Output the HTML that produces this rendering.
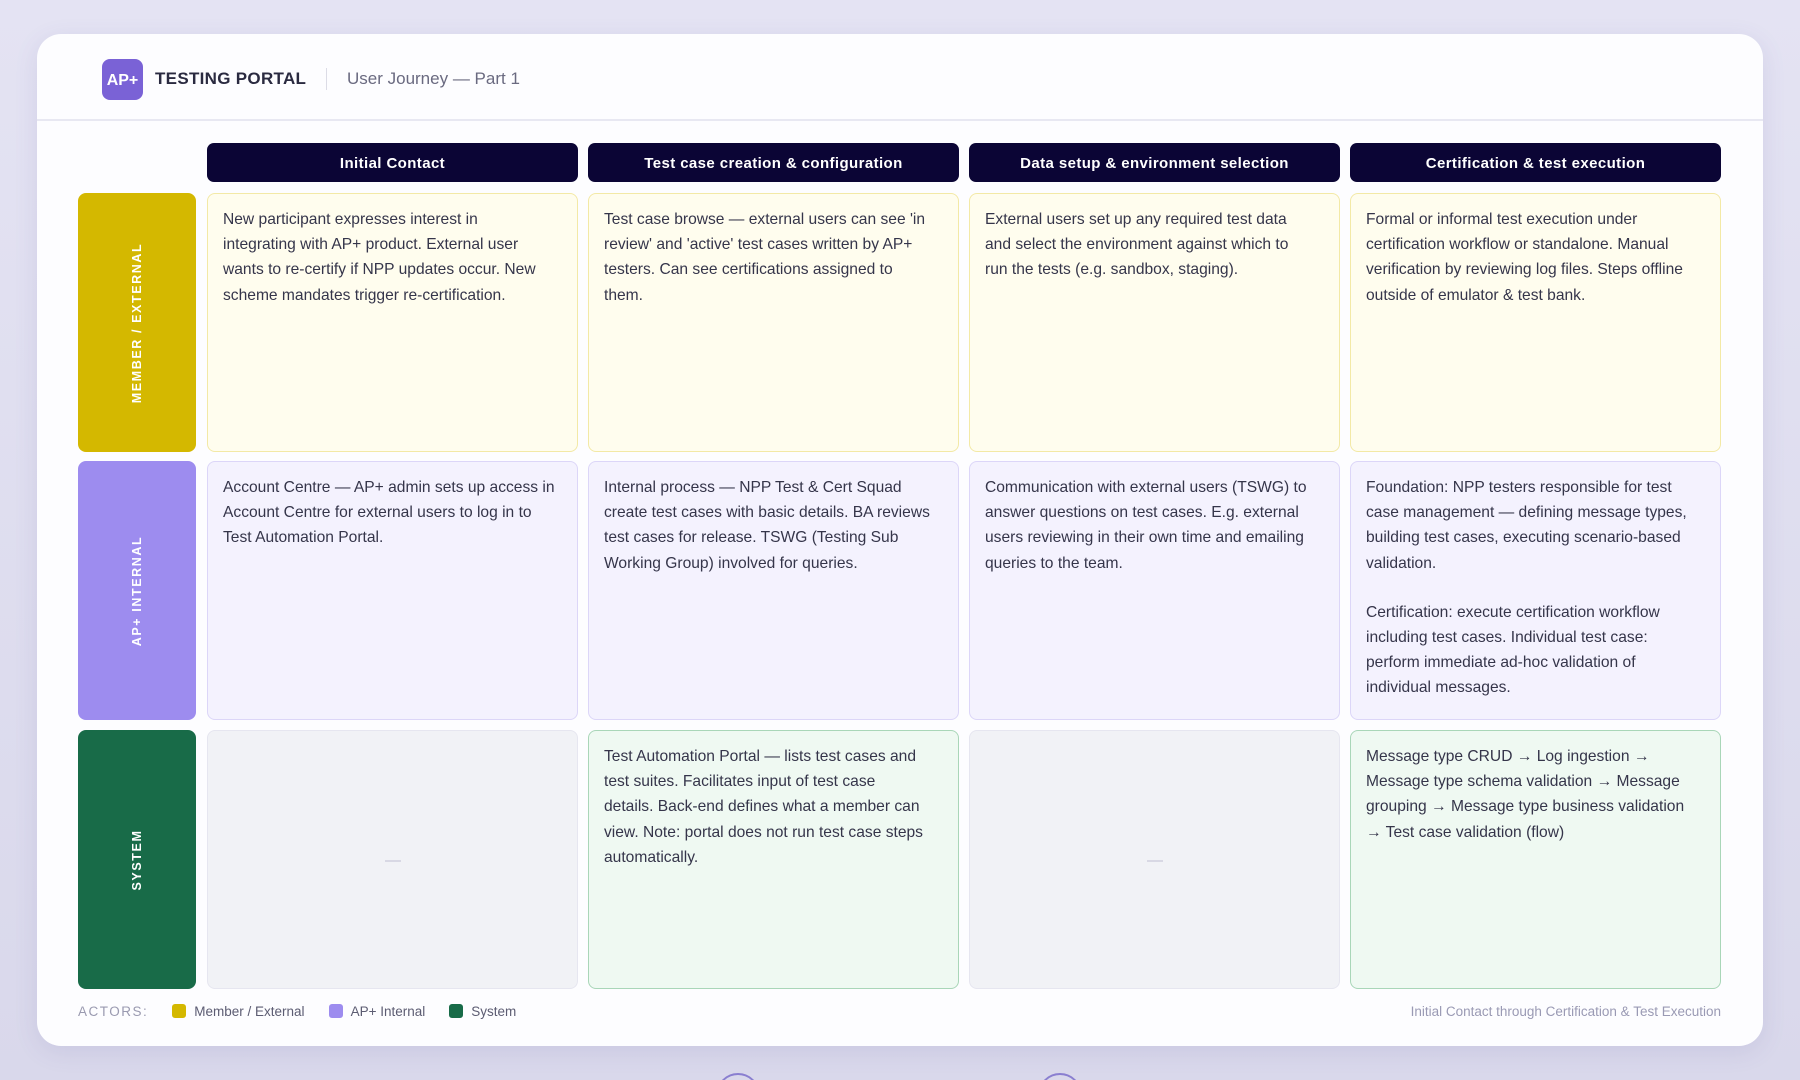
<!DOCTYPE html>
<html><head><meta charset="utf-8"><style>
*{box-sizing:border-box;margin:0;padding:0}
html,body{width:1800px;height:1080px;overflow:hidden}
body{background:linear-gradient(180deg,#e4e3f3,#d9d8eb);font-family:"Liberation Sans",sans-serif;position:relative}
.card{position:absolute;left:37px;top:34px;width:1726px;height:1012px;background:#fdfdff;border-radius:24px;box-shadow:0 6px 24px rgba(90,80,160,.12)}
.hdr{position:absolute;left:0;top:0;right:0;height:87px;border-bottom:2px solid #e8e8f2}
.logo{position:absolute;left:65px;top:25px;width:41px;height:41px;border-radius:8px;background:#7a62d6;color:#fff;font-weight:bold;font-size:16px;line-height:43px;text-align:center}
.title{position:absolute;left:118px;top:35px;font-size:17px;font-weight:bold;color:#2a2a40;letter-spacing:.3px}
.sep{position:absolute;left:289px;top:34px;width:1px;height:22px;background:#dcdce6}
.sub{position:absolute;left:310px;top:35px;font-size:17px;color:#6a6a80}
.col{position:absolute;top:109px;height:39px;width:371px;background:#0b0535;color:#fff;border-radius:7px;font-weight:bold;font-size:15px;text-align:center;line-height:41px;letter-spacing:.4px}
.lab{position:absolute;left:41px;width:118px;height:259px;border-radius:8px}
.lab span{position:absolute;left:50%;top:50%;transform:translate(-50%,-50%) rotate(-90deg);white-space:nowrap;color:#fff;font-weight:bold;font-size:12.5px;letter-spacing:1.6px}
.cell{position:absolute;width:371px;height:259px;border-radius:8px;padding:13px 4px 13px 15px;font-size:15.6px;line-height:25.2px;color:#35354a;white-space:nowrap}
.y{background:#fffdee;border:1.5px solid #f3e9a6}
.p{background:#f4f2fe;border:1.5px solid #dcd6f8}
.g{background:#f1f2f6;border:1.5px solid #e6e6f0}
.gr{background:#eff9f2;border:1.5px solid #a9d6b8}
.dash{position:absolute;left:50%;top:50%;width:16px;height:2px;margin-left:-8px;background:#d8d8e4}
.leg{position:absolute;top:970px;font-size:13.5px;color:#5c5c72}
.sw{display:inline-block;width:14px;height:14px;border-radius:3px;vertical-align:-2px;margin-right:8px}
.clip{position:absolute;left:0;top:1060px;width:1800px;height:20px;overflow:hidden}
.circ{position:absolute;top:13px;width:44px;height:44px;border:2px solid #8a7fd0;border-radius:50%}
</style></head><body>
<div class="card">
<div class="hdr"><div class="logo">AP+</div><div class="title">TESTING PORTAL</div><div class="sep"></div><div class="sub">User Journey — Part 1</div></div>
<div class="col" style="left:170px">Initial Contact</div>
<div class="col" style="left:551px">Test case creation &amp; configuration</div>
<div class="col" style="left:932px">Data setup &amp; environment selection</div>
<div class="col" style="left:1313px">Certification &amp; test execution</div>

<div class="lab" style="top:159px;background:#d4b800"><span>MEMBER / EXTERNAL</span></div>
<div class="lab" style="top:427px;background:#9d8cef"><span>AP+ INTERNAL</span></div>
<div class="lab" style="top:696px;background:#186b48"><span>SYSTEM</span></div>

<div class="cell y" style="left:170px;top:159px">New participant expresses interest in<br>integrating with AP+ product. External user<br>wants to re-certify if NPP updates occur. New<br>scheme mandates trigger re-certification.</div>
<div class="cell y" style="left:551px;top:159px">Test case browse — external users can see 'in<br>review' and 'active' test cases written by AP+<br>testers. Can see certifications assigned to<br>them.</div>
<div class="cell y" style="left:932px;top:159px">External users set up any required test data<br>and select the environment against which to<br>run the tests (e.g. sandbox, staging).</div>
<div class="cell y" style="left:1313px;top:159px">Formal or informal test execution under<br>certification workflow or standalone. Manual<br>verification by reviewing log files. Steps offline<br>outside of emulator &amp; test bank.</div>

<div class="cell p" style="left:170px;top:427px">Account Centre — AP+ admin sets up access in<br>Account Centre for external users to log in to<br>Test Automation Portal.</div>
<div class="cell p" style="left:551px;top:427px">Internal process — NPP Test &amp; Cert Squad<br>create test cases with basic details. BA reviews<br>test cases for release. TSWG (Testing Sub<br>Working Group) involved for queries.</div>
<div class="cell p" style="left:932px;top:427px">Communication with external users (TSWG) to<br>answer questions on test cases. E.g. external<br>users reviewing in their own time and emailing<br>queries to the team.</div>
<div class="cell p" style="left:1313px;top:427px">Foundation: NPP testers responsible for test<br>case management — defining message types,<br>building test cases, executing scenario-based<br>validation.<div style="height:24px"></div>Certification: execute certification workflow<br>including test cases. Individual test case:<br>perform immediate ad-hoc validation of<br>individual messages.</div>

<div class="cell g" style="left:170px;top:696px"><div class="dash"></div></div>
<div class="cell gr" style="left:551px;top:696px">Test Automation Portal — lists test cases and<br>test suites. Facilitates input of test case<br>details. Back-end defines what a member can<br>view. Note: portal does not run test case steps<br>automatically.</div>
<div class="cell g" style="left:932px;top:696px"><div class="dash"></div></div>
<div class="cell gr" style="left:1313px;top:696px">Message type CRUD → Log ingestion →<br>Message type schema validation → Message<br>grouping → Message type business validation<br>→ Test case validation (flow)</div>

<div class="leg" style="left:41px"><span style="color:#9a9ab0;letter-spacing:1.5px;margin-right:24px">ACTORS:</span><span class="sw" style="background:#d4b800"></span>Member / External<span style="display:inline-block;width:24px"></span><span class="sw" style="background:#9d8cef"></span>AP+ Internal<span style="display:inline-block;width:24px"></span><span class="sw" style="background:#186b48"></span>System</div>
<div class="leg" style="right:42px;color:#9a9ab4">Initial Contact through Certification &amp; Test Execution</div>
</div>
<div class="clip"><div class="circ" style="left:716px"></div><div class="circ" style="left:1038px"></div></div>
</body></html>
